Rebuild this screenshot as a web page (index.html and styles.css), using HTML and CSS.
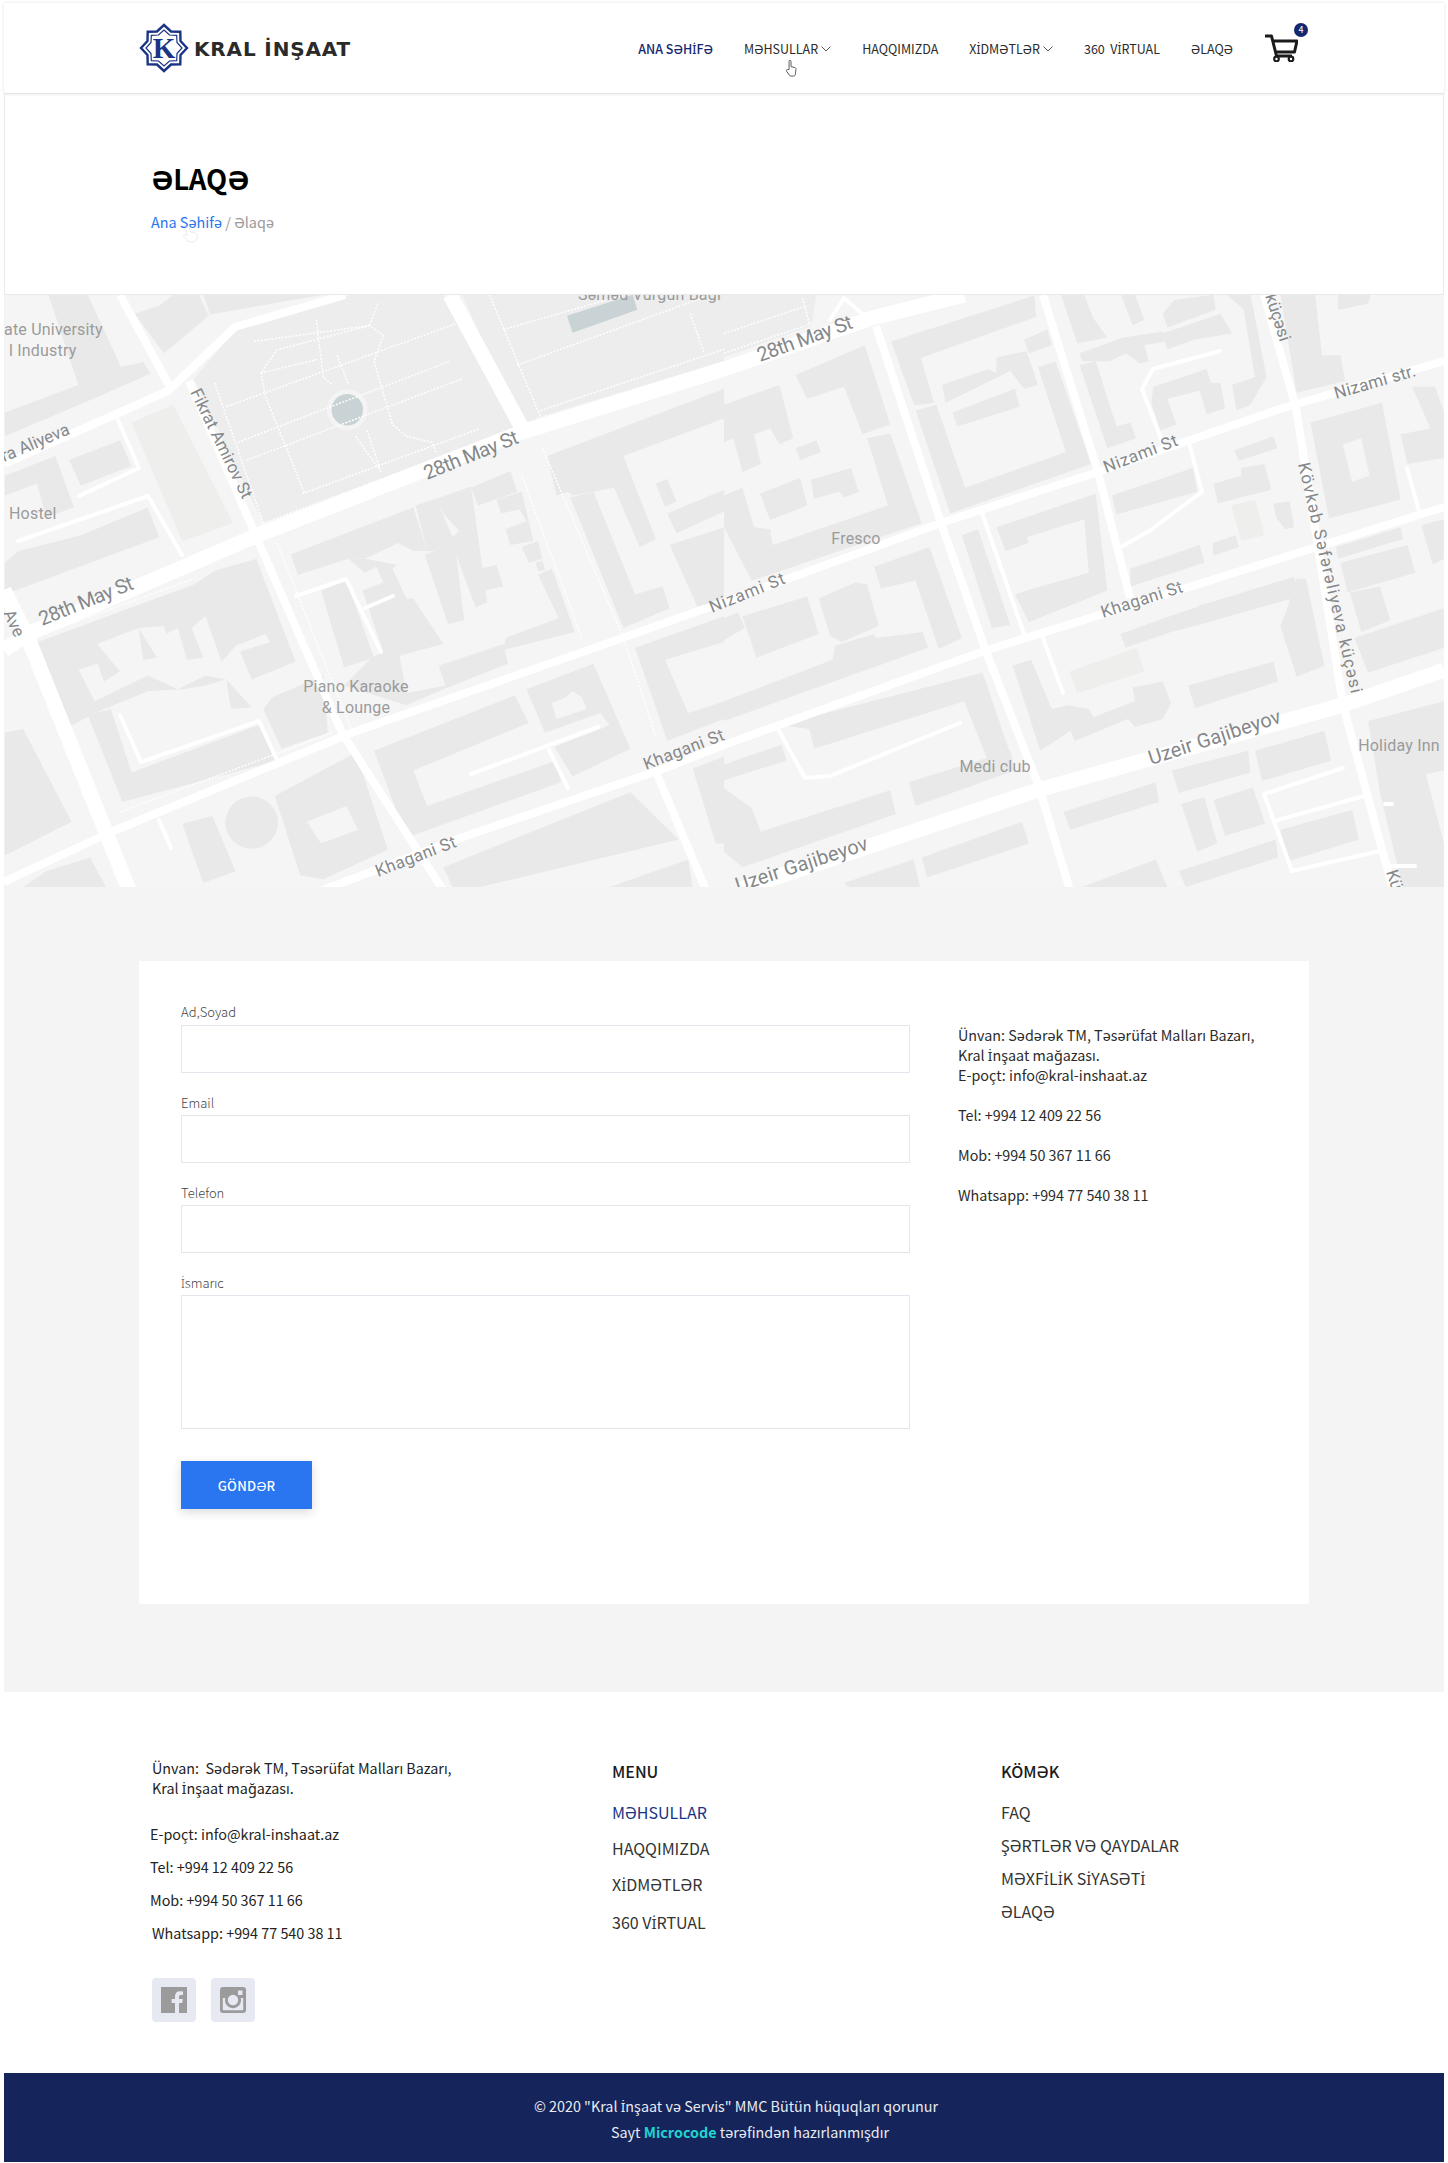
FILE: index.html
```html
<!DOCTYPE html>
<html>
<head>
<meta charset="utf-8">
<title>Əlaqə — Kral İnşaat</title>
<link rel="stylesheet" href="styles.css">
</head>
<body>
<div class="page">
  <header class="site-header">
    <a class="logo" href="#">
      <svg class="logo-mark" viewBox="0 0 50 50" width="50" height="50">
        <polygon class="logo-line-thick" points="25,2 32,8.5 41.3,8.7 41.5,18 48,25 41.5,32 41.3,41.3 32,41.5 25,48 18,41.5 8.7,41.3 8.5,32 2,25 8.5,18 8.7,8.7 18,8.5"/>
        <polygon class="logo-line" points="25,7 30.5,12 37.7,12.3 38,19.5 43,25 38,30.5 37.7,37.7 30.5,38 25,43 19.5,38 12.3,37.7 12,30.5 7,25 12,19.5 12.3,12.3 19.5,12"/>
        <text class="logo-k" x="25" y="35" text-anchor="middle">K</text>
      </svg>
      <span class="logo-text">KRAL İNŞAAT</span>
    </a>
    <nav class="main-nav">
      <a class="nav-link nav-active" href="#">ANA SƏH<span class="cap-i">İ</span>FƏ</a>
      <a class="nav-link nav-drop" href="#">MƏHSULLAR<svg class="caret" viewBox="0 0 10 6" width="10" height="6"><path d="M.5.5 5 5 9.5.5"/></svg><svg class="hand-cursor" viewBox="0 0 12 20" width="12" height="19"><path d="M4 11V2.400a1 1 0 0 1 2 0V8l4 1c1 .3 1.300 1 1.200 2l-.6 5c-.2 1.300-1 2-2 2H6c-.8 0-1.300-.4-1.800-1L1.500 13c-.8-1-.2-2.300 1-1.900z"/></svg></a>
      <a class="nav-link" href="#">HAQQIMIZDA</a>
      <a class="nav-link nav-drop" href="#"><span>X<span class="cap-i">İ</span>DMƏTLƏR</span><svg class="caret" viewBox="0 0 10 6" width="10" height="6"><path d="M.5.5 5 5 9.5.5"/></svg></a>
      <a class="nav-link" href="#">360&nbsp; V<span class="cap-i">İ</span>RTUAL</a>
      <a class="nav-link" href="#">ƏLAQƏ</a>
      <a class="cart" href="#">
        <svg class="cart-icon" viewBox="0 0 34 28" width="34" height="28"><path class="cart-line" d="M1 2h6.500l5 20h15.500"/><path class="cart-line" d="M9 7h24l-2.500 11H12"/><circle class="cart-wheel" cx="12.500" cy="25" r="2.300"/><circle class="cart-wheel" cx="27" cy="25" r="2.300"/></svg>
        <span class="cart-badge">4</span>
      </a>
    </nav>
  </header>

  <section class="page-title">
    <h1>ƏLAQƏ</h1>
    <p class="crumbs"><a href="#">Ana Səhifə</a> <span>/ Əlaqə</span><svg class="ghost-hand" viewBox="0 0 20 20" width="20" height="18"><path d="M5 4l2 8-2-1c-2-1-3 1-1 3 2 3 4 5 8 5 4 0 6-3 6-6 0-4-3-5-7-5L9 3C8 1 5 2 5 4z"/></svg></p>
  </section>

  <svg class="map" viewBox="4 295 1440 592" width="1440" height="592" role="img" aria-label="Xəritə">
    <rect class="m-bg" x="4" y="295" width="1440" height="592"/>
    <g transform="translate(0,290) scale(.4618,.3954)">
      <polygon class="m-park" points="420,225 510,100 760,12 960,12 1130,350 570,590"/>
      <polygon class="m-park" points="1000,12 1568,12 1568,180 1170,320 1130,345"/>
      <polygon class="m-b" points="10,12 190,12 262,195 310,182 326,212 172,290 10,370"/>
      <polygon class="m-l" points="10,12 105,12 170,240 10,310"/>
      <polygon class="m-b" points="292,60 345,40 375,12 430,12 452,65 355,160"/>
      <polygon class="m-b" points="440,12 700,12 455,62"/>
      <polygon class="m-b" points="150,430 260,380 285,445 175,495"/>
      <polygon class="m-b" points="10,470 120,420 160,550 100,575 80,490 10,520"/>
      <polygon class="m-b" points="10,690 40,660 175,620 195,690 10,770"/>
      <polygon class="m-b" points="175,620 320,550 345,625 195,690"/>
      <polygon class="m-p" points="285,335 375,290 505,590 395,635"/>
      <polygon class="m-b" points="630,668 895,550 925,660 895,660 862,640 790,680 755,680 645,720"/>
      <polygon class="m-b" points="900,545 945,528 985,640 945,660 925,660"/>
      <polygon class="m-b" points="945,528 1020,497 1055,790 1030,803 975,630 995,610 960,565"/>
      <polygon class="m-b" points="1020,500 1105,458 1120,510 1035,545"/>
      <polygon class="m-b" points="1075,530 1130,510 1155,635 1105,645 1095,605 1140,585 1125,555 1085,565"/>
      <polygon class="m-b" points="1130,650 1165,635 1175,680 1145,690"/>
      <polygon class="m-b" points="1160,690 1175,685 1180,708 1165,712"/>
      <polygon class="m-b" points="1040,705 1075,695 1090,750 1050,760"/>
      <polygon class="m-b" points="920,670 985,640 1005,835 970,845"/>
      <polygon class="m-b" points="755,680 790,680 860,695 850,705 880,780 895,780 960,895 865,925 880,1020 965,1000 950,950 1090,895 1100,945 960,1010 880,1050 745,1000 805,930 830,915 785,760 830,740 815,700 790,715"/>
      <polygon class="m-b" points="695,760 750,735 810,930 745,955"/>
      <polygon class="m-b" points="1165,720 1195,705 1245,865 1090,910 1095,880 1210,830"/>
      <polygon class="m-b" points="70,895 420,745 465,710 555,680 640,940 545,985 520,915 585,890 575,870 510,900 480,940 445,825 415,855 440,930 405,935 385,855 360,870 355,850 300,855 340,930 310,935 300,855 210,895 260,965 225,990 212,945 170,960 205,1040 320,975 385,1010 445,975 490,985 545,1055 500,1060 490,985 445,1000 395,1010 320,1015 205,1070 150,1105 115,1000 95,930"/>
      <polygon class="m-b" points="475,790 530,775 535,805 487,828"/>
      <polygon class="m-b" points="190,1075 240,1060 285,1220 560,1100 600,1190 265,1295"/>
      <polygon class="m-b" points="570,1060 590,1030 700,975 710,1120 610,1160"/>
      <polygon class="m-b" points="10,1120 50,1110 155,1345 10,1430"/>
      <polygon class="m-b" points="395,1350 460,1330 510,1470 440,1500"/>
      <ellipse class="m-b" cx="545" cy="1347" rx="57" ry="66"/>
      <polygon class="m-b" points="595,1280 770,1170 840,1415 700,1490 650,1480"/>
      <polygon class="m-l" points="665,1345 750,1305 775,1365 695,1400"/>
      <polygon class="m-b" points="50,1510 100,1470 195,1435 230,1510"/>
      <polygon class="m-b" points="1185,420 1568,250 1568,325 1350,420 1420,630 1385,650 1330,500 1240,520 1230,510 1205,520"/>
      <polygon class="m-b" points="1235,525 1285,510 1375,770 1435,750 1450,805 1350,855"/>
      <polygon class="m-b" points="1420,490 1445,478 1465,535 1440,548"/>
      <polygon class="m-b" points="1445,565 1568,505 1568,560 1465,615"/>
      <polygon class="m-b" points="1450,645 1568,600 1568,790 1510,800"/>
      <polygon class="m-b" points="1375,905 1568,825 1568,890 1440,935 1490,1070 1568,1040 1568,1085 1445,1140"/>
      <polygon class="m-b" points="1500,1210 1568,1180 1568,1400 1550,1400"/>
      <polygon class="m-b" points="1140,1010 1285,945 1365,1160 1240,1230 1200,1155 1300,1110 1320,1100 1300,1070 1180,1120"/>
      <polygon class="m-b" points="810,1165 1115,1025 1145,1095 895,1215 925,1305 1205,1190 1215,1245 880,1385"/>
      <polygon class="m-l" points="1195,1045 1225,1030 1240,1015 1260,1030 1270,1060 1205,1085"/>
      <polygon class="m-b" points="960,1460 1365,1270 1470,1390 1040,1510 980,1510"/>
      <polygon class="m-b" points="1320,1510 1490,1440 1500,1510"/>
      <ellipse class="m-ring" cx="752" cy="303" rx="44" ry="52"/>
      <ellipse class="m-water" cx="752" cy="303" rx="34" ry="40"/>
      <polygon class="m-water" points="1228,65 1370,12 1380,50 1240,108"/>
      <g class="m-dots">
        <path d="M465,235 570,590M490,295 1000,80M515,385 975,180M535,430 1000,225M655,515 1040,350M570,590 1130,345"/>
        <path d="M565,210 690,175M600,150 565,210 575,270 660,515M685,75 700,220 720,240M730,165 755,240M770,370 825,460M795,355 825,460"/>
        <path d="M550,130 800,90 830,115 810,180 850,340 880,370 935,385 945,410M800,90 820,30M605,150 800,90"/>
        <path d="M1090,100 1568,-60M1120,190 1568,0M1060,12 1170,320M1495,60 1525,160M1170,305 1568,150"/>
        <path d="M1175,400 1350,880 1420,1130M600,640 760,1110M1130,470 1260,880M70,880 420,730M260,1320 720,1120"/>
      </g>
    </g>
    <g transform="translate(724,290) scale(.4618,.3954)">
      <polygon class="m-park" points="0,12 200,12 190,90 0,170"/>
      <polygon class="m-b" points="362,130 672,14 676,68 426,172 455,285 412,292"/>
      <polygon class="m-b" points="415,305 460,290 522,500 740,410 680,195 718,180 795,440 490,565"/>
      <polygon class="m-b" points="472,240 572,200 590,210 590,170 655,155 680,240 650,250 620,205 480,285"/>
      <polygon class="m-b" points="495,310 630,250 640,295 505,345"/>
      <polygon class="m-b" points="650,125 700,100 710,140 660,160"/>
      <polygon class="m-b" points="770,190 805,180 850,345 880,335 892,375 830,400"/>
      <polygon class="m-b" points="730,12 780,12 800,72 830,120 765,135"/>
      <polygon class="m-b" points="860,12 890,12 910,75 885,90"/>
      <polygon class="m-b" points="950,60 975,25 1060,12 1065,50 960,95"/>
      <polygon class="m-b" points="770,160 865,120 950,105 955,130 910,140 920,180 900,185 870,160 835,180 775,180"/>
      <polygon class="m-b" points="950,110 1075,60 1100,110 1020,125 960,150"/>
      <polygon class="m-b" points="1090,12 1140,12 1175,220 1140,290 1110,305 1100,240 1150,220 1125,50"/>
      <polygon class="m-b" points="930,245 1045,200 1055,235 1075,235 1085,300 1045,315 1030,255 960,275 980,340 945,355 925,285"/>
      <polygon class="m-b" points="1105,405 1190,370 1198,400 1115,432"/>
      <polygon class="m-b" points="1060,490 1120,470 1120,450 1170,440 1185,505 1135,520 1070,540"/>
      <polygon class="m-b" points="840,520 1015,450 1025,510 850,568"/>
      <polygon class="m-p" points="1098,545 1150,530 1170,620 1120,635"/>
      <polygon class="m-b" points="1190,540 1225,535 1235,600 1215,605 1195,575"/>
      <polygon class="m-b" points="1058,640 1108,620 1115,650 1060,672"/>
      <polygon class="m-b" points="880,705 1030,645 1040,690 880,750"/>
      <polygon class="m-b" points="1205,12 1280,12 1295,165 1335,165 1345,230 1240,260"/>
      <polygon class="m-b" points="1330,12 1400,12 1395,35 1330,50"/>
      <polygon class="m-b" points="1270,335 1425,285 1465,530 1310,578"/>
      <polygon class="m-l" points="1340,390 1380,375 1398,470 1360,485"/>
      <polygon class="m-b" points="1465,365 1530,350 1490,245 1540,245 1559,310 1559,425 1480,440"/>
      <polygon class="m-b" points="1325,650 1465,600 1470,630 1330,680"/>
      <polygon class="m-b" points="1335,690 1480,645 1497,715 1350,765"/>
      <polygon class="m-b" points="1355,765 1420,750 1443,835 1380,865"/>
      <polygon class="m-b" points="1365,880 1559,805 1559,905 1395,968"/>
      <polygon class="m-b" points="1510,595 1559,580 1559,680 1535,695"/>
      <polygon class="m-b" points="1395,1090 1559,1040 1559,1510 1470,1510 1420,1270"/>
      <polygon class="m-l" points="1520,1225 1559,1215 1559,1400"/>
      <polygon class="m-b" points="1150,1165 1300,1115 1315,1190 1165,1242"/>
      <polygon class="m-b" points="970,1215 1135,1165 1140,1220 985,1272"/>
      <polygon class="m-b" points="735,1320 935,1245 942,1295 750,1365"/>
      <polygon class="m-b" points="990,1300 1040,1282 1068,1400 1025,1420"/>
      <polygon class="m-b" points="1060,1290 1145,1258 1172,1350 1085,1380"/>
      <polygon class="m-b" points="1205,1365 1360,1315 1375,1390 1222,1445"/>
      <polygon class="m-b" points="985,1470 1195,1390 1200,1435 1000,1510"/>
      <polygon class="m-b" points="775,1510 935,1440 960,1510"/>
      <polygon class="m-b" points="428,1435 645,1345 660,1400 440,1485"/>
      <polygon class="m-b" points="260,1500 410,1440 425,1510 270,1510"/>
      <polygon class="m-b" points="625,950 665,935 710,1060 745,1050 790,1060 800,1080 890,1040 885,1005 950,990 968,1045 950,1085 890,1105 875,1085 760,1140 750,1115 685,1165"/>
      <polygon class="m-p" points="748,965 895,905 910,965 765,1020"/>
      <polygon class="m-b" points="1005,1000 1190,940 1200,990 1020,1058"/>
      <polygon class="m-b" points="858,870 965,825 968,865 870,905"/>
      <polygon class="m-b" points="1025,800 1235,725 1245,775 1035,845"/>
      <polygon class="m-b" points="965,825 1030,800 1035,845 968,865"/>
      <polygon class="m-b" points="1215,820 1240,730 1260,730 1300,950 1240,978 1205,850"/>
      <polygon class="m-b" points="515,620 550,605 620,848 580,855"/>
      <polygon class="m-b" points="590,600 805,515 830,760 660,840 630,770 670,755 790,715 780,580 655,625 660,640 610,660"/>
      <polygon class="m-b" points="325,700 445,650 515,880 465,908 415,735 340,755"/>
      <polygon class="m-b" points="40,825 180,775 205,870 70,930"/>
      <polygon class="m-b" points="205,780 285,740 310,745 335,850 255,890 230,875"/>
      <polygon class="m-b" points="0,830 30,815 45,855 0,885"/>
      <polygon class="m-b" points="0,1040 235,935 240,900 325,870 330,880 430,865 442,905 0,1090"/>
      <polygon class="m-b" points="155,215 305,140 360,340 300,365 260,245 180,275"/>
      <polygon class="m-b" points="0,290 120,240 150,375 120,390 100,350 65,365 80,440 40,460 20,375 0,385"/>
      <polygon class="m-b" points="155,400 200,380 210,410 165,430"/>
      <polygon class="m-b" points="78,515 165,475 180,545 100,582"/>
      <polygon class="m-b" points="188,480 275,450 292,510 260,525 250,510 195,528"/>
      <polygon class="m-b" points="0,520 40,500 65,600 100,605 105,645 355,545 310,375 360,362 428,590 60,735 0,600"/>
      <polygon class="m-b" points="120,1100 560,968 625,1190 575,1200 520,1040 195,1160 185,1110"/>
      <polygon class="m-b" points="0,1260 60,1310 80,1370 360,1265 372,1325 40,1460 0,1420"/>
      <polygon class="m-b" points="400,1245 620,1165 630,1215 415,1305"/>
      <polygon class="m-b" points="0,1200 125,1150 135,1190 0,1240"/>
      <g class="m-dots">
        <path d="M0,110 180,40M0,160 190,85M170,20 185,85"/>
      </g>
    </g>
    <g class="m-road-thick">
      <polyline points="4,650 28,634 258,535 522,432 724,369 872,318 964,295"/>
      <polyline points="738,890 1038,790 1343,705 1444,670"/>
      <polyline points="4,590 28,638 129,890"/>
      <polyline points="450,295 522,428"/>
    </g>
    <g class="m-road">
      <polyline points="4,464 168,391 235,327 345,295"/>
      <polyline points="120,295 171,389"/>
      <polyline points="189,381 252,527 342,733 443,890"/>
      <polyline points="4,882 111,832 351,733 577,654 724,602 941,523 1098,472 1283,408 1444,361"/>
      <polyline points="323,890 466,836 660,770 724,745 987,650 1186,588 1444,507"/>
      <polyline points="876,326 941,523 987,654 1038,784 1070,890"/>
      <polyline points="1043,295 1098,472 1130,598"/>
      <polyline points="1264,295 1296,408 1343,705 1393,890"/>
      <polyline points="656,772 706,890"/>
    </g>
    <g class="m-road-thin">
      <polyline points="118,420 139,468 79,496"/>
      <polyline points="18,541 148,496 182,555"/>
      <polyline points="296,596 346,579 381,652"/>
      <polyline points="365,608 393,596"/>
      <polyline points="120,715 141,762 259,721 277,760"/>
      <polyline points="471,774 598,727"/>
      <polyline points="549,750 568,788"/>
      <polyline points="159,820 171,848"/>
      <polyline points="982,513 1024,634"/>
      <polyline points="1043,638 1063,693"/>
      <polyline points="1220,351 1153,369 1142,389 1163,444"/>
      <polyline points="1190,446 1202,492 1149,531 1121,547"/>
      <polyline points="777,727 805,778 830,776 960,723"/>
      <polyline points="1407,468 1419,511"/>
      <polyline points="1343,768 1264,794 1292,871"/>
      <polyline points="1278,820 1364,796"/>
      <polyline points="1292,871 1380,851"/>
      <polyline points="1385,804 1392,804"/>
      <polyline points="1392,866 1415,866"/>
      <polyline points="830,320 844,298 867,318"/>
    </g>
    <g class="m-label">
      <text x="4" y="335">ate University</text>
      <text x="9" y="356">l Industry</text>
      <text x="9" y="519">Hostel</text>
      <text class="m-mid" x="356" y="692">Piano Karaoke</text>
      <text class="m-mid" x="356" y="713">&amp; Lounge</text>
      <text class="m-mid" x="856" y="544">Fresco</text>
      <text class="m-mid" x="995" y="772">Medi club</text>
      <text class="m-mid" x="1399" y="751">Holiday Inn</text>
      <text x="578" y="300">Səməd Vurğun Bağı</text>
    </g>
    <g class="m-street">
      <text transform="translate(4,462) rotate(-23)">ra Aliyeva</text>
      <text transform="translate(190,392) rotate(64)">Fikrat Amirov St</text>
      <text transform="translate(3,613) rotate(65)">Ave</text>
      <text transform="translate(378,877) rotate(-21)" textLength="85">Khagani St</text>
      <text transform="translate(646,770) rotate(-21)" textLength="85">Khagani St</text>
      <text transform="translate(1103,618) rotate(-18)" textLength="85">Khagani St</text>
      <text transform="translate(712,613) rotate(-22)" textLength="80">Nizami St</text>
      <text transform="translate(1106,473) rotate(-21)" textLength="78">Nizami St</text>
      <text transform="translate(1336,399) rotate(-16)" textLength="84">Nizami str.</text>
      <text transform="translate(1298,464) rotate(77)" textLength="236">Kövkəb Səfərəliyeva küçəsi</text>
      <text transform="translate(1265,296) rotate(72)">küçəsi</text>
      <text transform="translate(1386,872) rotate(72)">Kü</text>
    </g>
    <g class="m-street-big">
      <text transform="translate(427,480) rotate(-22)" textLength="100">28th May St</text>
      <text transform="translate(42,626) rotate(-22)" textLength="100">28th May St</text>
      <text transform="translate(760,362) rotate(-20)" textLength="100">28th May St</text>
      <text transform="translate(1151,765) rotate(-18)" textLength="138">Uzeir Gajibeyov</text>
      <text transform="translate(738,892) rotate(-18)" textLength="138">Uzeir Gajibeyov</text>
    </g>
  </svg>

  <section class="contact-band">
    <div class="contact-card">
      <form class="contact-form">
        <label class="field"><span class="field-name">Ad,Soyad</span><input type="text"></label>
        <label class="field"><span class="field-name">Email</span><input type="email"></label>
        <label class="field"><span class="field-name">Telefon</span><input type="tel"></label>
        <label class="field"><span class="field-name"><span class="cap-i">İ</span>smarıc</span><textarea></textarea></label>
        <button class="send" type="button">GÖNDƏR</button>
      </form>
      <div class="contact-info">
        <p>Ünvan: Sədərək TM, Təsərüfat Malları Bazarı,<br>Kral <span class="cap-i">İ</span>nşaat mağazası.<br>E-poçt: info@kral-inshaat.az</p>
        <p>Tel: +994 12 409 22 56</p>
        <p>Mob: +994 50 367 11 66</p>
        <p>Whatsapp: +994 77 540 38 11</p>
      </div>
    </div>
  </section>

  <footer class="site-footer">
    <div class="footer-cols">
      <div class="f-about">
        <p class="f-address">Ünvan:&nbsp; Sədərək TM, Təsərüfat Malları Bazarı,<br>Kral <span class="cap-i">İ</span>nşaat mağazası.</p>
        <ul class="f-contacts">
          <li>E-poçt: info@kral-inshaat.az</li>
          <li>Tel: +994 12 409 22 56</li>
          <li>Mob: +994 50 367 11 66</li>
          <li class="f-shift">Whatsapp: +994 77 540 38 11</li>
        </ul>
        <div class="socials">
          <a class="social" href="#" aria-label="Facebook"><svg viewBox="0 0 26 26" width="26" height="26"><path class="soc-fill" fill-rule="evenodd" d="M0 0h26v26H18V16h3.300l.5-4H18V9.800c0-1.100.4-1.800 1.900-1.800H22V4.400C21.600 4.300 20.400 4.200 19 4.200c-3 0-5 1.800-5 5.100V12h-3.400v4H14v10H0z"/></svg></a>
          <a class="social" href="#" aria-label="Instagram"><svg viewBox="0 0 26 26" width="26" height="26"><path class="soc-fill" fill-rule="evenodd" d="M3 0h20a3 3 0 0 1 3 3v20a3 3 0 0 1-3 3H3a3 3 0 0 1-3-3V3a3 3 0 0 1 3-3zm15 3.500v4.500h4.500V3.500zM2.800 11v11.200c0 .6.400 1 1 1h18.400c.6 0 1-.4 1-1V11h-2.500a8 8 0 1 1-15.400 0zM13 7.800a5.200 5.200 0 1 0 0 10.400 5.200 5.200 0 0 0 0-10.400z"/></svg></a>
        </div>
      </div>
      <div class="f-col f-menu">
        <h4>MENU</h4>
        <ul>
          <li class="f-current">MƏHSULLAR</li>
          <li>HAQQIMIZDA</li>
          <li>X<span class="cap-i">İ</span>DMƏTLƏR</li>
          <li class="f-last">360 V<span class="cap-i">İ</span>RTUAL</li>
        </ul>
      </div>
      <div class="f-col f-help">
        <h4>KÖMƏK</h4>
        <ul>
          <li>FAQ</li>
          <li>ŞƏRTLƏR VƏ QAYDALAR</li>
          <li>MƏXF<span class="cap-i">İ</span>L<span class="cap-i">İ</span>K S<span class="cap-i">İ</span>YASƏT<span class="cap-i">İ</span></li>
          <li>ƏLAQƏ</li>
        </ul>
      </div>
    </div>
    <div class="copyright">
      <p class="copy-one">© 2020 "Kral <span class="cap-i">İ</span>nşaat və Servis" MMC Bütün hüquqları qorunur</p>
      <p class="copy-two">Sayt <b>Microcode</b> tərəfindən hazırlanmışdır</p>
    </div>
  </footer>
</div>
</body>
</html>
```
FILE: styles.css
```css
* { box-sizing: border-box; }
html, body { margin: 0; padding: 0; background: #fff; }
body {
  font-family: "Noto Sans CJK JP", "Noto Sans", sans-serif;
  color: #222;
  font-size: 15px;
}
a { color: inherit; text-decoration: none; }
p, h1, h4, ul { margin: 0; padding: 0; }
ul { list-style: none; }
.cap-i { font-family: "Noto Sans", sans-serif; font-size: .94em; line-height: 0; }

.page { width: 1440px; margin: 3px 0 0 4px; }

/* header */
.site-header {
  height: 91px;
  padding: 0 146px 0 135px;
  display: flex;
  align-items: center;
  justify-content: space-between;
  background: #fff;
  border-bottom: 1px solid #e6e6e6;
  box-shadow: 0 0 3px rgba(0,0,0,.12);
}
.logo { display: flex; align-items: center; gap: 5px; }
.logo-mark { flex: none; }
.logo-line-thick { fill: #fff; stroke: #1a3486; stroke-width: 2.4; }
.logo-line { fill: none; stroke: #1a3486; stroke-width: 1.2; }
.logo-k { font-family: "Liberation Serif", serif; font-size: 29px; font-weight: 700; fill: #1a3486; }
.logo-text {
  font-family: "DejaVu Sans", sans-serif;
  font-size: 20px;
  font-weight: 700;
  color: #2a2a2a;
  letter-spacing: .85px;
  position: relative;
  top: 1px;
}
.main-nav { display: flex; align-items: center; gap: 31px; padding-top: 1px; }
.nav-link { font-size: 12.5px; line-height: 20px; color: #2b2b2b; position: relative; white-space: nowrap; }
.nav-active { color: #14286f; font-weight: 500; }
.nav-drop { display: flex; align-items: center; gap: 3px; }
.caret { fill: none; stroke: #444; stroke-width: .9; }
.hand-cursor { position: absolute; left: 41px; top: 20px; fill: #fff; stroke: #555; stroke-width: 1; }
.cart { position: relative; display: block; width: 34px; height: 28px; margin-top: -2px; }
.cart-icon { display: block; }
.cart-line { fill: none; stroke: #1b1b1b; stroke-width: 3; stroke-linejoin: round; }
.cart-wheel { fill: #fff; stroke: #1b1b1b; stroke-width: 2.200; }
.cart-badge {
  position: absolute;
  left: 30px;
  top: -11px;
  width: 14px;
  height: 14px;
  border-radius: 50%;
  background: #14286f;
  color: #fff;
  font-size: 9px;
  line-height: 14px;
  text-align: center;
}

/* page title */
.page-title {
  height: 201px;
  padding: 64px 0 0 146px;
  border: 1px solid #e9e9e9;
  border-top: 0;
}
.page-title h1 { font-size: 27.5px; line-height: 40px; font-weight: 700; letter-spacing: -.2px; color: #000; }
.crumbs { position: relative; margin-top: 13px; font-size: 14.4px; line-height: 22px; color: #9a9a9a; }
.crumbs a { color: #2a75f0; }
.ghost-hand { position: absolute; left: 29px; top: 14px; fill: none; stroke: #e3e8f0; stroke-width: 1; }

/* map */
.map { display: block; }
.m-bg { fill: #f5f5f5; }
.m-park { fill: #ecedec; }
.m-b { fill: #e9e9e9; }
.m-p { fill: #eeeeed; }
.m-l { fill: #f5f5f5; }
.m-water { fill: #c9d2d4; }
.m-ring { fill: #f3f4f3; }
.m-dots { fill: none; stroke: #fff; stroke-width: 1.500; stroke-dasharray: 2 1.500; }
.m-dots path { vector-effect: non-scaling-stroke; }
.m-road-thick polyline, .m-road polyline, .m-road-thin polyline { fill: none; stroke: #fff; stroke-linejoin: round; }
.m-road-thick polyline { stroke-width: 15px; }
.m-road polyline { stroke-width: 8px; }
.m-road-thin polyline { stroke-width: 4px; stroke-linecap: round; }
.m-label text, .m-street text, .m-street-big text { font-family: "Roboto", sans-serif; }
.m-label text { font-size: 16px; fill: #9b9b9b; letter-spacing: .2px; }
.m-street text { font-size: 17px; fill: #85888a; }
.m-street-big text { font-size: 20px; fill: #85888a; }
.m-mid { text-anchor: middle; }

/* contact */
.contact-band { background: #f4f4f4; padding: 74px 135px 88px; }
.contact-card {
  background: #fff;
  height: 643px;
  padding: 42px 42px 0;
  display: flex;
  gap: 48px;
}
.contact-form { width: 729px; flex: none; }
.field { display: block; margin-bottom: 20px; }
.field-name { display: block; font-size: 13px; font-weight: 300; line-height: 20px; margin-bottom: 2px; color: #444; }
.field:first-child .field-name { position: relative; top: -1px; }
.field input, .field textarea {
  display: block;
  width: 100%;
  height: 48px;
  border: 1px solid #e4e6ee;
  border-radius: 0;
  background: #fff;
  outline: 0;
  resize: none;
}
.field textarea { height: 134px; }
.send {
  display: block;
  width: 131px;
  height: 48px;
  margin-top: 32px;
  border: 0;
  background: #2a75f0;
  color: #fff;
  font: 500 13px "Noto Sans CJK JP", sans-serif;
  letter-spacing: .3px;
  box-shadow: 0 3px 10px rgba(0,0,0,.15);
}
.contact-info { padding-top: 22px; font-size: 14.35px; line-height: 20px; color: #2b2b2b; }
.contact-info p { margin-bottom: 20px; }

/* footer */
.site-footer { background: #fff; }
.footer-cols {
  height: 381px;
  padding: 66px 0 0 148px;
  display: grid;
  grid-template-columns: 460px 389px 1fr;
}
.f-about { font-size: 14.35px; line-height: 20px; color: #222; }
.f-address { margin-bottom: 26px; }
.f-contacts { margin-left: -2px; }
.f-contacts li { height: 33px; line-height: 20px; }
.f-contacts .f-shift { margin-left: 2px; }
.socials { display: flex; gap: 15px; margin-top: 22px; }
.social {
  width: 44px;
  height: 44px;
  border-radius: 4px;
  background: #e6e9f2;
  display: flex;
  align-items: center;
  justify-content: center;
}
.soc-fill { fill: #9b9b9b; }
.f-col { padding-top: 3px; }
.f-col h4 { font-size: 16px; font-weight: 500; line-height: 20px; color: #1a1a1a; margin-bottom: 21px; }
.f-col li { font-size: 16px; line-height: 20px; color: #333; }
.f-menu li { margin-bottom: 16px; }
.f-menu .f-current { color: #1a3486; }
.f-menu li:nth-child(3) { margin-bottom: 18px; }
.f-help li { margin-bottom: 13px; }
.copyright {
  height: 89px;
  padding-top: 20px;
  background: #15245b;
  color: #e9ebf2;
  font-size: 14.35px;
  line-height: 26px;
  text-align: center;
}
.copy-one { padding-left: 24px; }
.copy-two { padding-left: 52px; }
.copyright b { color: #1fd2d0; font-weight: 700; }
```
